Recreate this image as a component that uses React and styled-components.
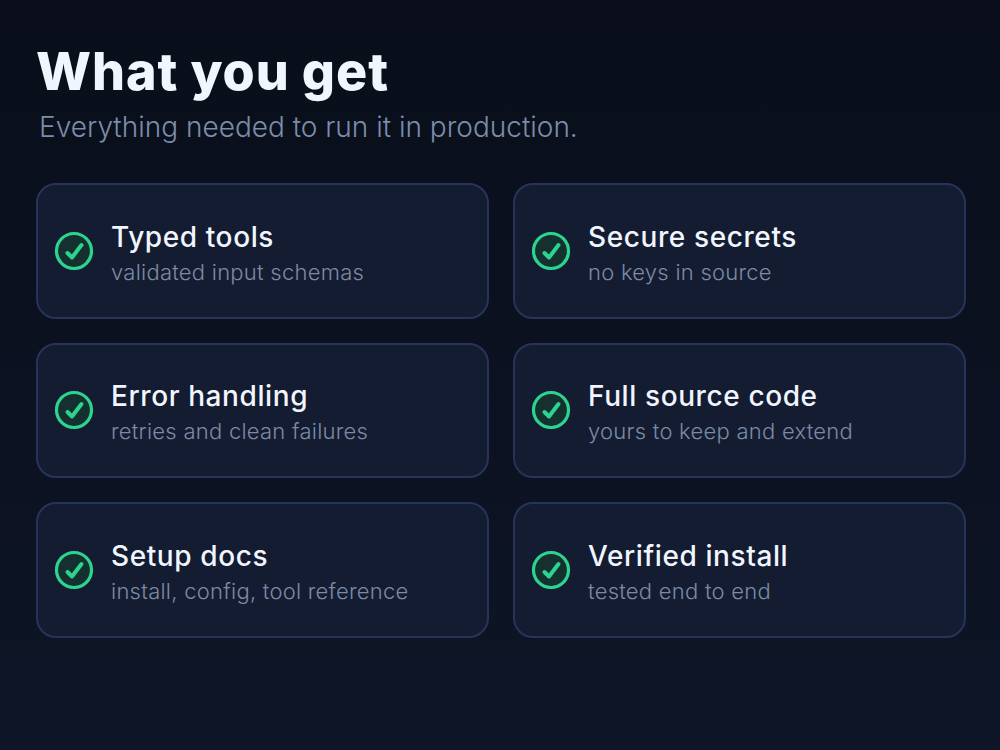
import React from "react";
import styled, { createGlobalStyle } from "styled-components";

const GlobalStyle = createGlobalStyle`
  html, body {
    margin: 0;
    padding: 0;
    height: 100%;
    background: #0a0f1c;
  }
`;

const Page = styled.div`
  width: 1000px;
  height: 750px;
  box-sizing: border-box;
  padding: 41px 34px 0 36px;
  overflow: hidden;
  font-family: Inter, "Liberation Sans", sans-serif;
  background: linear-gradient(180deg, #090e1a 0%, #0e1526 100%);
`;

const Title = styled.h1`
  margin: 0;
  font-size: 52px;
  line-height: 62px;
  font-weight: 800;
  letter-spacing: 0.9px;
  color: #f1f5fe;
`;

const Subtitle = styled.p`
  margin: 2px 0 0 3px;
  font-size: 28px;
  line-height: 44px;
  font-weight: 300;
  color: #7c8cab;
`;

const Grid = styled.div`
  display: grid;
  grid-template-columns: 453px 453px;
  grid-auto-rows: 135.5px;
  gap: 24px;
  margin-top: 34px;
`;

const Card = styled.div`
  display: flex;
  align-items: center;
  gap: 17px;
  box-sizing: border-box;
  padding: 0 16px;
  border: 2px solid #27345a;
  border-radius: 20px;
  background: #141c31;
`;

const CheckMark = styled.svg`
  flex: none;
  width: 40px;
  height: 40px;
`;

const Texts = styled.div`
  display: flex;
  flex-direction: column;
  padding-top: 8px;
`;

const CardTitle = styled.div`
  font-size: 28px;
  line-height: 35px;
  font-weight: 500;
  letter-spacing: 0.6px;
  color: #f1f5fe;
`;

const CardText = styled.div`
  font-size: 22px;
  line-height: 35px;
  font-weight: 300;
  letter-spacing: 0.25px;
  color: #7c8aa3;
`;

const items = [
  ["Typed tools", "validated input schemas"],
  ["Secure secrets", "no keys in source"],
  ["Error handling", "retries and clean failures"],
  ["Full source code", "yours to keep and extend"],
  ["Setup docs", "install, config, tool reference"],
  ["Verified install", "tested end to end"],
];

const Check = () => (
  <CheckMark viewBox="0 0 40 40" fill="none">
    <circle cx="20" cy="20" r="17.5" fill="#14302f" stroke="#2dd48f" strokeWidth="3.2" />
    <path
      d="M13.5 22l4.5 4.5L27.5 14"
      stroke="#2dd48f"
      strokeWidth="4"
      strokeLinecap="round"
      strokeLinejoin="round"
    />
  </CheckMark>
);

export default function App() {
  return (
    <>
      <GlobalStyle />
      <Page>
        <Title>What you get</Title>
        <Subtitle>Everything needed to run it in production.</Subtitle>
        <Grid>
          {items.map(([title, text]) => (
            <Card key={title}>
              <Check />
              <Texts>
                <CardTitle>{title}</CardTitle>
                <CardText>{text}</CardText>
              </Texts>
            </Card>
          ))}
        </Grid>
      </Page>
    </>
  );
}
